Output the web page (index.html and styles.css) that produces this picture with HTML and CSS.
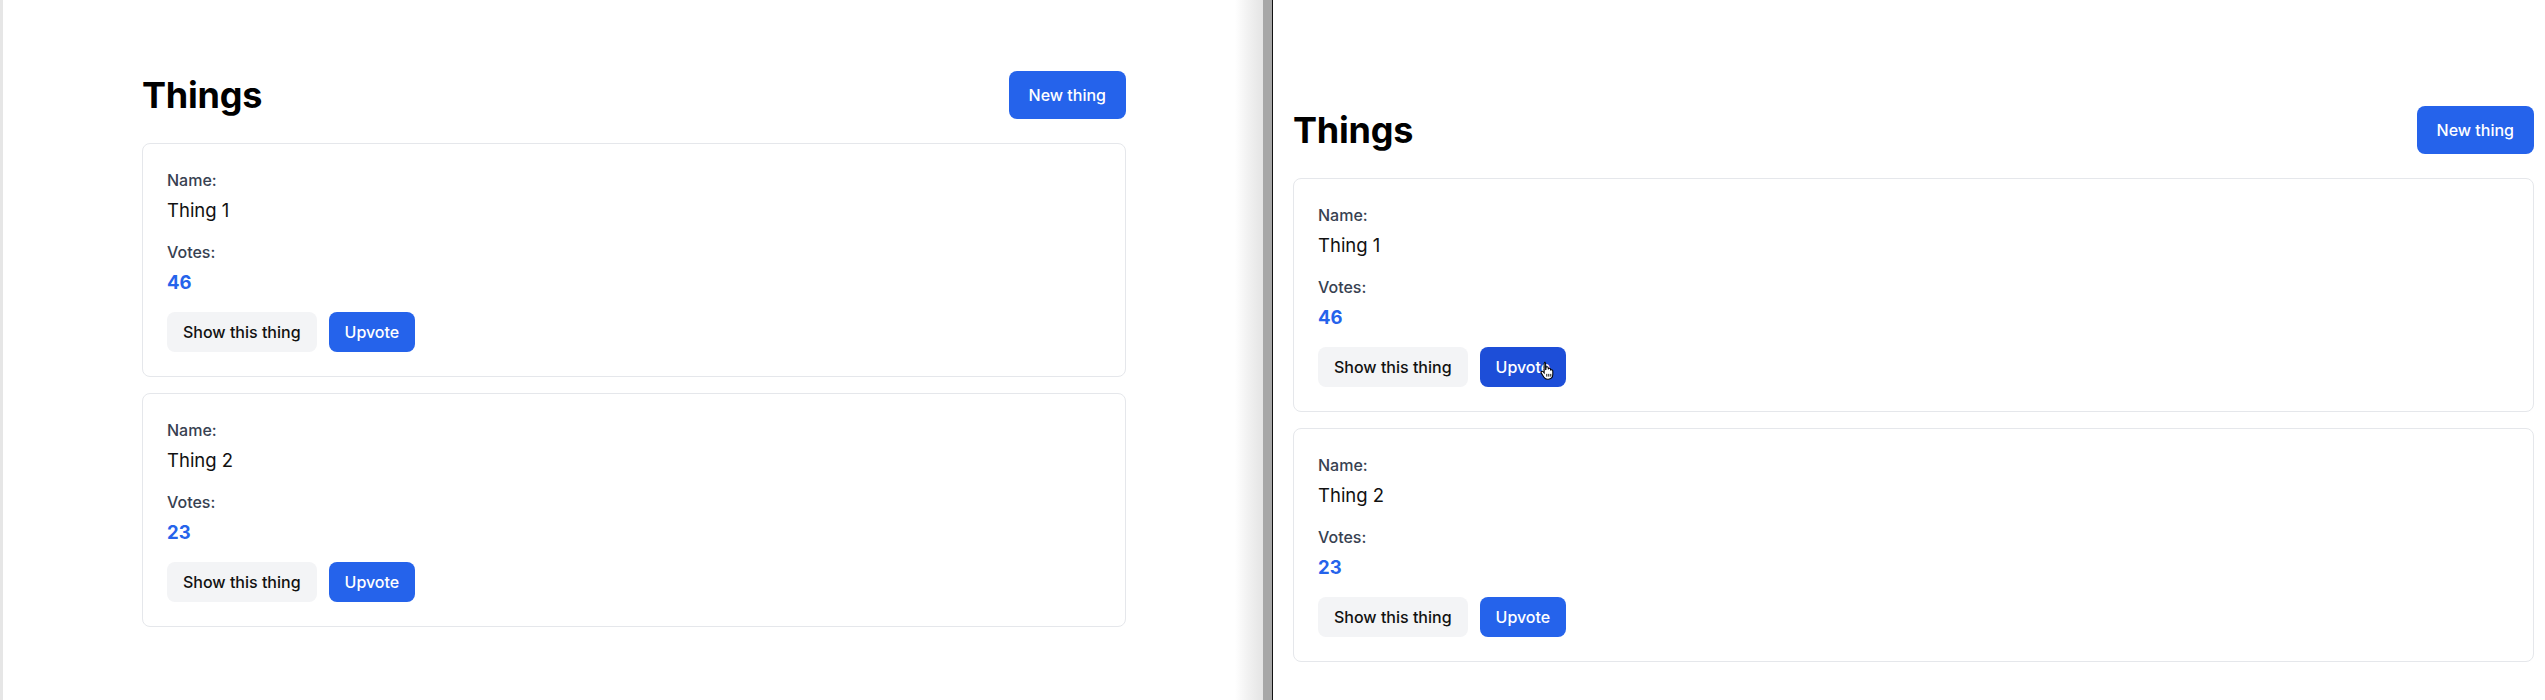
FILE: index.html
```html
<!DOCTYPE html>
<html lang="en">
<head>
<meta charset="utf-8">
<title>Things</title>
<link rel="stylesheet" href="styles.css">
</head>
<body>
<div class="screen">
  <section class="window window-left">
    <main class="container container-left">
      <header class="page-header">
        <h1 class="title">Things</h1>
        <a class="btn btn-primary btn-lg" href="#">New thing</a>
      </header>
      <div class="list">
        <article class="card">
          <div class="field">
            <span class="label">Name:</span>
            <span class="value">Thing 1</span>
          </div>
          <div class="field">
            <span class="label">Votes:</span>
            <span class="value votes">46</span>
          </div>
          <div class="actions">
            <a class="btn btn-light" href="#">Show this thing</a>
            <button class="btn btn-primary">Upvote</button>
          </div>
        </article>
        <article class="card">
          <div class="field">
            <span class="label">Name:</span>
            <span class="value">Thing 2</span>
          </div>
          <div class="field">
            <span class="label">Votes:</span>
            <span class="value votes">23</span>
          </div>
          <div class="actions">
            <a class="btn btn-light" href="#">Show this thing</a>
            <button class="btn btn-primary">Upvote</button>
          </div>
        </article>
      </div>
    </main>
    <div class="win-shadow"></div>
  </section>
  <div class="win-edge"></div>
  <section class="window window-right">
    <main class="container container-right">
      <header class="page-header">
        <h1 class="title">Things</h1>
        <a class="btn btn-primary btn-lg" href="#">New thing</a>
      </header>
      <div class="list">
        <article class="card">
          <div class="field">
            <span class="label">Name:</span>
            <span class="value">Thing 1</span>
          </div>
          <div class="field">
            <span class="label">Votes:</span>
            <span class="value votes">46</span>
          </div>
          <div class="actions">
            <a class="btn btn-light" href="#">Show this thing</a>
            <button class="btn btn-primary is-hover">Upvote
              <svg class="cursor" width="14" height="19" viewBox="0 0 13 18" aria-hidden="true">
                <path d="M4 1.2c.7 0 1.2.5 1.2 1.2V8l.3-.1V6.6c0-.6.5-1.1 1.1-1.1s1.1.5 1.1 1.1v1.3c.1-.6.6-1 1.1-1s1.1.5 1.1 1.1v1c.1-.5.5-.8 1-.8.6 0 1.1.5 1.1 1.1v3.6c0 2.5-1.8 4.4-4.3 4.4H7c-1.5 0-2.600-.7-3.4-1.9L1.1 11.5c-.4-.6-.2-1.3.3-1.6.5-.3 1.1-.2 1.5.3l.9 1.2V2.4c0-.7.5-1.2 1.2-1.2z" fill="#fff" stroke="#000" stroke-width="1"/>
                <path d="M6.3 12.2v2.6M8.2 12.2v2.6M10.1 12.2v2.6" stroke="#000" stroke-width=".9"/>
              </svg>
            </button>
          </div>
        </article>
        <article class="card">
          <div class="field">
            <span class="label">Name:</span>
            <span class="value">Thing 2</span>
          </div>
          <div class="field">
            <span class="label">Votes:</span>
            <span class="value votes">23</span>
          </div>
          <div class="actions">
            <a class="btn btn-light" href="#">Show this thing</a>
            <button class="btn btn-primary">Upvote</button>
          </div>
        </article>
      </div>
    </main>
  </section>
</div>
</body>
</html>
```
FILE: styles.css
```css
* { box-sizing: border-box; }
html, body { margin: 0; padding: 0; }
body {
  font-family: "Inter", "Noto Sans", "Liberation Sans", sans-serif;
  color: #111827;
  background: #ffffff;
  width: 2545px;
  height: 700px;
  overflow: hidden;
}
.screen {
  display: flex;
  height: 700px;
}
.window {
  background: #ffffff;
  height: 700px;
  overflow: hidden;
}
.window-left {
  width: 1263px;
  flex: 0 0 1263px;
  display: flex;
  border-left: 3px solid #e6e6e6;
}
.win-shadow {
  flex: 0 0 28px;
  margin-left: auto;
  background: linear-gradient(to right, #ffffff 0%, #f2f2f2 45%, #e4e4e4 100%);
}
.win-edge {
  flex: 0 0 10px;
  background: #a7a7a7;
  border-right: 1px solid #111111;
}
.window-right {
  flex: 1 1 auto;
  min-width: 0;
}
.container {
  display: flex;
  flex-direction: column;
}
.container-left {
  width: 984px;
  flex: 0 0 984px;
  margin-left: 139px;
  padding-top: 71px;
}
.container-right {
  width: 1261px;
  padding: 106px 0 0 20px;
}
.page-header {
  display: flex;
  justify-content: space-between;
  align-items: center;
  margin-bottom: 24px;
}
.title {
  margin: 0;
  font-size: 36px;
  line-height: 40px;
  font-weight: 700;
  color: #000000;
  letter-spacing: -0.2px;
}
.list {
  display: flex;
  flex-direction: column;
  gap: 16px;
}
.card {
  border: 1px solid #e5e7eb;
  border-radius: 8px;
  padding: 24px;
  display: flex;
  flex-direction: column;
  gap: 16px;
  background: #ffffff;
}
.field {
  display: flex;
  flex-direction: column;
  gap: 4px;
}
.label {
  font-size: 16px;
  line-height: 24px;
  font-weight: 500;
  color: #374151;
}
.value {
  font-size: 18.5px;
  line-height: 28px;
  color: #111111;
}
.value.votes {
  color: #2563eb;
  font-weight: 700;
}
.actions {
  display: flex;
  gap: 12px;
}
.btn {
  display: inline-flex;
  align-items: center;
  justify-content: center;
  position: relative;
  border: 0;
  border-radius: 8px;
  font-family: inherit;
  font-size: 16px;
  line-height: 24px;
  font-weight: 500;
  padding: 8px 16px;
  text-decoration: none;
  cursor: pointer;
}
.btn-light {
  background: #f3f4f6;
  color: #111111;
}
.btn-primary {
  background: #2563eb;
  color: #ffffff;
}
.btn-primary.is-hover {
  background: #1d4ed8;
}
.btn-lg {
  font-size: 16px;
  line-height: 24px;
  padding: 12px 20px;
}
.cursor {
  position: absolute;
  left: 60px;
  top: 14px;
}
```
